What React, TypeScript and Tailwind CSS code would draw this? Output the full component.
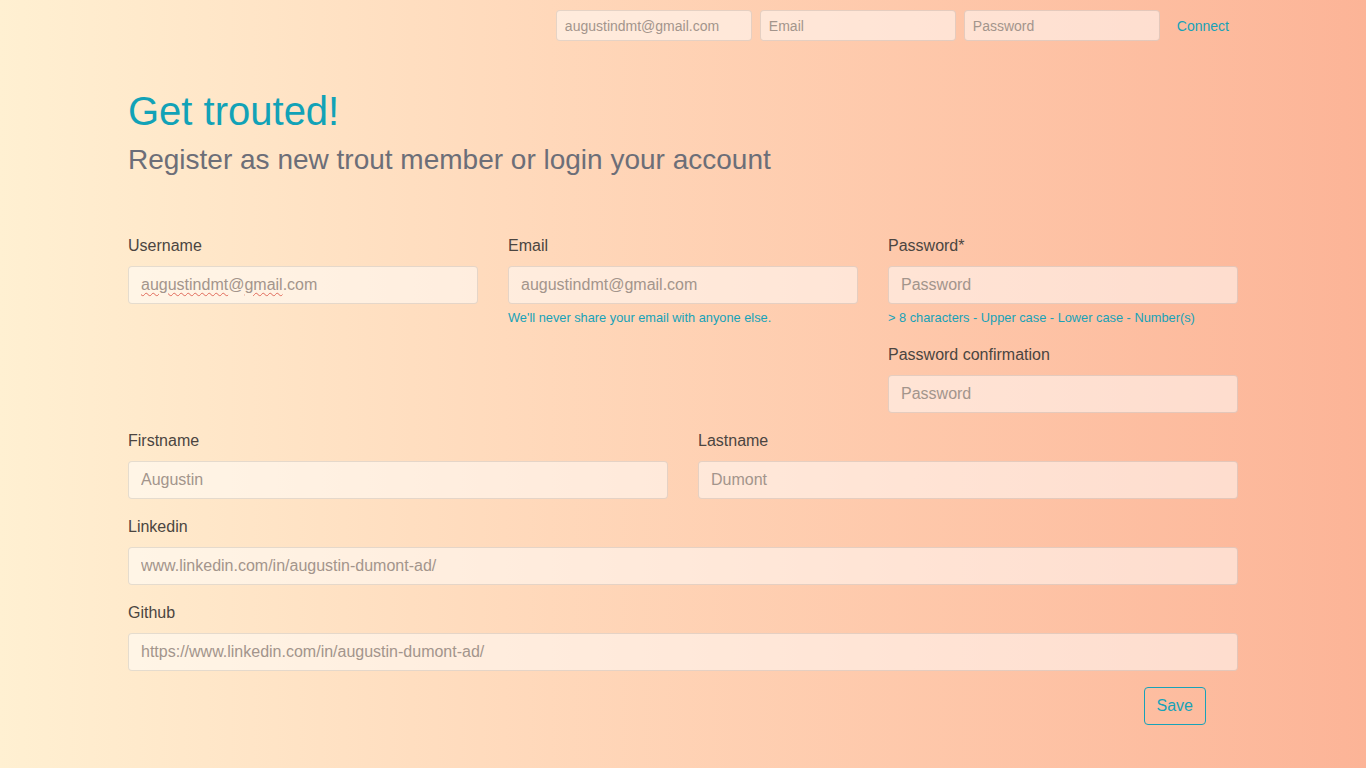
import React from "react";

const inputBase =
  "w-full h-[38px] px-3 rounded-[4px] border border-black/10 bg-white/50 text-base text-[#a3958c] placeholder:text-[#a3958c] outline-none";

function Field({
  label,
  placeholder,
  help,
}: {
  label: string;
  placeholder: string;
  help?: string;
}) {
  return (
    <div className="mb-4">
      <label className="block mb-2 text-base leading-6 text-[#4b4541]">{label}</label>
      <input className={inputBase} placeholder={placeholder} readOnly />
      {help && (
        <p className="mt-1 text-[12.8px] leading-[19px] text-[#17a2b8]">{help}</p>
      )}
    </div>
  );
}

export default function App() {
  return (
    <div
      className="min-h-screen bg-gradient-to-r from-[#fff0d2] to-[#fcb497]"
      style={{ fontFamily: '"Liberation Sans", Arial, sans-serif' }}
    >
      {/* Top login bar */}
      <div className="w-[1110px] mx-auto pt-[10px] flex justify-end items-center gap-2">
        {["augustindmt@gmail.com", "Email", "Password"].map((p) => (
          <input
            key={p}
            readOnly
            placeholder={p}
            className="w-[196px] h-[31px] px-2 rounded-[4px] border border-black/10 bg-white/50 text-sm text-[#a3958c] placeholder:text-[#a3958c] outline-none"
          />
        ))}
        <button className="ml-[1px] mr-[1px] px-2 h-[31px] text-sm text-[#17a2b8]">Connect</button>
      </div>

      <div className="w-[1110px] mx-auto">
        {/* Heading */}
        <div className="mt-[46px] mb-[57px]">
          <h1 className="text-[40px] leading-[48px] mb-2 text-[#12a2b7]">Get trouted!</h1>
          <h3 className="text-[28px] leading-[33.6px] text-[#6c6e78]">
            Register as new trout member or login your account
          </h3>
        </div>

        {/* Account row */}
        <div className="grid grid-cols-3 gap-x-[30px]">
          <div className="mb-4">
            <label className="block mb-2 text-base leading-6 text-[#4b4541]">Username</label>
            <div className={inputBase + " flex items-center"}>
              <span>
                <span className="underline decoration-wavy decoration-[#e06a5a] decoration-1 underline-offset-2">augustindmt</span>
                @
                <span className="underline decoration-wavy decoration-[#e06a5a] decoration-1 underline-offset-2">gmail</span>
                .com
              </span>
            </div>
          </div>
          <Field
            label="Email"
            placeholder="augustindmt@gmail.com"
            help="We'll never share your email with anyone else."
          />
          <div>
            <Field
              label="Password*"
              placeholder="Password"
              help="> 8 characters - Upper case - Lower case - Number(s)"
            />
            <Field label="Password confirmation" placeholder="Password" />
          </div>
        </div>

        {/* Identity row */}
        <div className="grid grid-cols-2 gap-x-[30px]">
          <Field label="Firstname" placeholder="Augustin" />
          <Field label="Lastname" placeholder="Dumont" />
        </div>
        <Field label="Linkedin" placeholder="www.linkedin.com/in/augustin-dumont-ad/" />
        <Field label="Github" placeholder="https://www.linkedin.com/in/augustin-dumont-ad/" />

        <div className="flex justify-end pr-[32px]">
          <button className="h-[38px] px-3 rounded-[4px] border border-[#17a2b8] text-base text-[#17a2b8]">
            Save
          </button>
        </div>
      </div>
    </div>
  );
}
